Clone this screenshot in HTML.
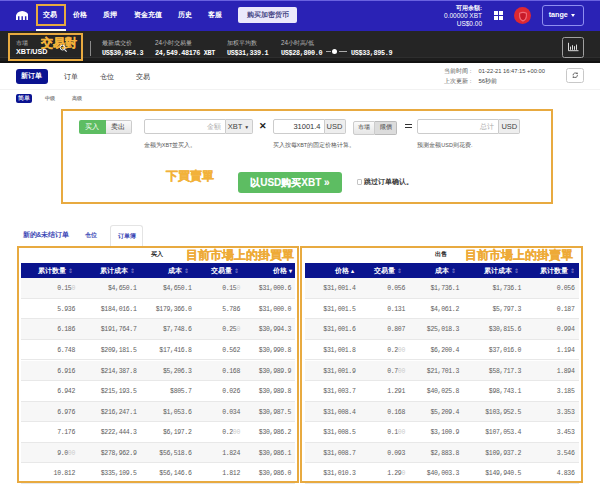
<!DOCTYPE html>
<html><head><meta charset="utf-8">
<style>
*{margin:0;padding:0;box-sizing:border-box}
html,body{width:600px;height:484px;overflow:hidden;background:#fff;font-family:"Liberation Sans",sans-serif;position:relative}
.a{position:absolute}
.nav{left:0;top:0;width:600px;height:31px;background:#2a22b5}
.navtop{left:0;top:0;width:600px;height:1px;background:#6a62e0}
.ni{color:#fff;font-size:7.2px;top:11px;line-height:8px;white-space:nowrap;font-weight:bold}
.ob{border:2px solid #e8aa40}
.dark{left:0;top:31px;width:600px;height:31.5px;background:linear-gradient(#252525 0,#252525 26px,#2e2e2e 26px,#2e2e2e 27px,#1d1d1d 27px,#1d1d1d 30.5px,#111 30.5px)}
.lbl{color:#bdbdbd;font-size:6.3px;line-height:7px;white-space:nowrap}
.val{color:#fff;font-size:6.8px;letter-spacing:-0.33px;line-height:8px;font-weight:bold;font-family:"Liberation Mono",monospace;white-space:nowrap}
.orange{color:#f2b23a;font-weight:bold;white-space:nowrap;-webkit-text-stroke:0.35px #f2b23a}
.tbl{font-family:"Liberation Mono",monospace;font-size:6.5px;letter-spacing:-0.33px;color:#606060}
.hdr{background:#0a148e;height:14.5px}
.row{height:20.55px;border-bottom:1px solid #e8e8e8}
.g{background:#f7f7f7}
.c{position:absolute;top:0;line-height:20px;text-align:right;white-space:nowrap}
.hc{position:absolute;top:0;line-height:14.5px;color:#fff;font-family:"Liberation Sans",sans-serif;font-weight:bold;font-size:6px;white-space:nowrap;text-align:right}
.f{color:#ccc}

.tv{position:absolute;height:20.55px;line-height:21.4px;text-align:right;white-space:nowrap;font-family:"Liberation Mono",monospace;font-size:6.5px;letter-spacing:-0.33px;color:#606060}
.hc{position:absolute;height:14.5px;line-height:15px;color:#fff;font-weight:bold;font-size:6.5px;white-space:nowrap;text-align:right}
.si{color:#8a8fd0;font-weight:normal;font-size:6px}
.sw{font-size:6px}
.bt{position:absolute;font-size:6px;line-height:14px;text-align:center}
.inp{position:absolute;border:1px solid #ccc;background:#fff;border-radius:2px 0 0 2px}
.add{position:absolute;border:1px solid #ccc;border-left:none;background:#eee;border-radius:0 2px 2px 0;color:#444;text-align:center}
.help{position:absolute;color:#555;font-size:5.5px;line-height:7px;white-space:nowrap}
</style></head><body>
<!-- NAV -->
<div class="a nav"></div>
<div class="a navtop"></div>
<svg class="a" style="left:15.8px;top:10.5px" width="12.4" height="9.5" viewBox="0 0 124 95"><path d="M0 52A62 52 0 0 1 124 52Z" fill="#fff"/><rect x="0" y="40" width="20" height="55" rx="10" fill="#fff"/><rect x="34.7" y="40" width="20" height="55" rx="10" fill="#fff"/><rect x="69.3" y="40" width="20" height="55" rx="10" fill="#fff"/><rect x="104" y="40" width="20" height="55" rx="10" fill="#fff"/></svg>
<div class="a ob" style="left:36px;top:4px;width:30px;height:22px"></div>
<div class="a" style="left:36px;top:29px;width:30px;height:2px;background:#fff"></div>
<div class="a ni" style="left:43px">交易</div>
<div class="a ni" style="left:73px">价格</div>
<div class="a ni" style="left:103px">质押</div>
<div class="a ni" style="left:134px">资金充值</div>
<div class="a ni" style="left:178px">历史</div>
<div class="a ni" style="left:208px">客服</div>
<div class="a" style="left:238.3px;top:7.3px;width:59px;height:15.6px;background:#ebe9fb;border-radius:2px;color:#4a4a88;font-weight:bold;font-size:7px;line-height:15.6px;text-align:center">购买加密货币</div>
<div class="a" style="left:400px;top:4px;width:82px;text-align:right;color:#fff;font-size:6.5px;line-height:8px"><b style="font-size:6px">可用余額:</b><br>0.00000 XBT<br>US$0.00</div>
<div class="a" style="left:494px;top:11px;width:4px;height:4px;background:#fff"></div>
<div class="a" style="left:499px;top:11px;width:4px;height:4px;background:#fff"></div>
<div class="a" style="left:494px;top:16px;width:4px;height:4px;background:#fff"></div>
<div class="a" style="left:499px;top:16px;width:4px;height:4px;background:#fff"></div>
<div class="a" style="left:513.75px;top:7px;width:17px;height:17px;border-radius:50%;background:#de2832"></div>
<svg class="a" style="left:517.5px;top:10.5px" width="10" height="11" viewBox="0 0 10 11"><path d="M1.6 2.2Q5 0.6 8.4 2.2V5.2Q8.4 8 5 10Q1.6 8 1.6 5.2Z" fill="#c81a28" stroke="#f06a76" stroke-width="1.1"/></svg>
<div class="a" style="left:542px;top:5px;width:42px;height:20.5px;border:1px solid #8f8ff0;border-radius:3px"></div><div class="a" style="left:548.7px;top:10px;color:#fff;font-weight:bold;font-size:7.2px;line-height:9px">tange</div><div class="a" style="left:570.7px;top:14px;width:0;height:0;border-left:2.7px solid transparent;border-right:2.7px solid transparent;border-top:3px solid #fff"></div>

<!-- DARK BAR -->
<div class="a dark"></div>
<div class="a ob" style="left:7.5px;top:32.5px;width:75px;height:28px;border-width:2.5px"></div>
<div class="a lbl" style="left:16px;top:39px">市場</div>
<div class="a" style="left:16px;top:47.5px;color:#fff;font-weight:bold;font-size:7.2px;line-height:8px">XBT/USD</div>
<div class="a orange" style="left:41px;top:35.5px;font-size:12px;line-height:14px">交易對</div>
<svg class="a" style="left:58.5px;top:44px" width="9" height="9" viewBox="0 0 9 9"><circle cx="3.6" cy="3.6" r="2.4" fill="none" stroke="#eee" stroke-width="1"/><path d="M5.4 5.4L7.6 7.6" stroke="#eee" stroke-width="1.1"/></svg>
<div class="a" style="left:90px;top:41px;width:1px;height:15px;background:#8a8a8a"></div>
<div class="a lbl" style="left:102px;top:39px">最新成交价</div>
<div class="a val" style="left:102px;top:49px">US$30,954.3</div>
<div class="a lbl" style="left:155px;top:39px">24小时交易量</div>
<div class="a val" style="left:155px;top:49px">24,549.48176 XBT</div>
<div class="a lbl" style="left:227px;top:39px">加权平均数</div>
<div class="a val" style="left:227px;top:49px">US$31,339.1</div>
<div class="a lbl" style="left:281px;top:39px">24小时高/低</div>
<div class="a val" style="left:281px;top:49px">US$28,800.0</div>
<div class="a" style="left:325.7px;top:51.2px;width:5px;height:1.3px;background:#aaa"></div><div class="a" style="left:339px;top:51.2px;width:8px;height:1.3px;background:#aaa"></div>
<div class="a" style="left:332px;top:49.2px;width:5px;height:5px;border-radius:50%;background:#fff"></div>
<div class="a val" style="left:351px;top:49px">US$33,895.9</div>
<div class="a" style="left:562px;top:36.5px;width:22px;height:21.5px;border:1px solid #a0a0a0;border-radius:2.5px"></div>
<svg class="a" style="left:566px;top:42px" width="14" height="10" viewBox="0 0 14 10"><path d="M2.5 0.8V8.7H12.5" fill="none" stroke="#f0f0f0" stroke-width="0.9"/><path d="M4.5 7.8V4.6M6.5 7.8V3.2M8.5 7.8V4.2M10.5 7.8V2.6" stroke="#f0f0f0" stroke-width="0.9"/></svg>

<!-- TABS -->
<div class="a" style="left:15.5px;top:69px;width:32px;height:14.7px;background:#0a1290;border-radius:3px;color:#fff;font-size:7px;font-weight:bold;line-height:14.7px;text-align:center">新订单</div>
<div class="a" style="left:64px;top:72.5px;color:#333;font-size:7px;line-height:8px">订单</div>
<div class="a" style="left:100px;top:72.5px;color:#333;font-size:7px;line-height:8px">仓位</div>
<div class="a" style="left:136px;top:72.5px;color:#333;font-size:7px;line-height:8px">交易</div>
<div class="a" style="left:444px;top:67.5px;color:#555;font-size:6px;line-height:7px">当前时间 :</div>
<div class="a" style="left:478.5px;top:67.5px;color:#444;font-size:5.75px;line-height:7px">01-22-21 16:47:15 +00:00</div>
<div class="a" style="left:444px;top:78px;color:#555;font-size:6px;line-height:7px">上次更新 :</div>
<div class="a" style="left:478.5px;top:78px;color:#444;font-size:6px;line-height:7px">56秒前</div>
<div class="a" style="left:566.25px;top:68.25px;width:17.5px;height:15px;border:1px solid #c8c8c8;border-radius:2.5px"></div><svg class="a" style="left:571.5px;top:72.3px" width="6.5" height="6.5" viewBox="0 0 13 13"><path d="M2.2 6.8A4.3 4.3 0 0 1 9.8 3.6" fill="none" stroke="#555" stroke-width="1.8"/><path d="M10.8 6.2A4.3 4.3 0 0 1 3.2 9.4" fill="none" stroke="#555" stroke-width="1.8"/><path d="M8 1.2L11.8 1.6L11 5.2Z" fill="#555"/><path d="M5 11.8L1.2 11.4L2 7.8Z" fill="#555"/></svg>
<div class="a" style="left:0;top:89px;width:600px;height:1px;background:#f2f2f2"></div>
<div class="a" style="left:16px;top:94px;width:16px;height:8.5px;background:#0a1290;border-radius:2px;color:#dde;font-size:5.5px;font-weight:bold;line-height:8.5px;text-align:center">简单</div>
<div class="a" style="left:45px;top:95px;color:#888;font-size:5.2px;font-weight:bold;line-height:7px">中级</div>
<div class="a" style="left:72px;top:95px;color:#888;font-size:5.2px;font-weight:bold;line-height:7px">高级</div>

<!-- ORDER FORM -->
<div class="a ob" style="left:60.5px;top:108.5px;width:492px;height:95px"></div>


<div class="bt a" style="left:78.75px;top:119.5px;width:27px;height:14.25px;background:#5dbd62;border-radius:2px 0 0 2px;color:#fff;font-size:7px">买入</div>
<div class="bt a" style="left:105.5px;top:119.5px;width:26.5px;height:14.25px;background:linear-gradient(#fafafa,#e6e6e6);border:1px solid #ccc;border-left:none;border-radius:0 2px 2px 0;color:#333;font-size:7px;line-height:12.5px">卖出</div>
<div class="inp" style="left:143.75px;top:118.75px;width:82px;height:15px;color:#aaa;font-size:6.5px;line-height:13px;text-align:right;padding-right:4px">金額</div>
<div class="add" style="left:225.5px;top:118.75px;width:27px;height:15px;font-size:7.5px;line-height:13px">XBT <span style="font-size:5px">▼</span></div>
<div class="a" style="left:258.5px;top:120px;font-size:9px;line-height:12px;font-weight:bold;color:#222">✕</div>
<div class="inp" style="left:272.5px;top:118.75px;width:52px;height:15px;color:#333;font-size:7.5px;line-height:13px;text-align:right;padding-right:3px">31001.4</div>
<div class="add" style="left:324.5px;top:118.75px;width:21px;height:15px;font-size:7.5px;line-height:13px">USD</div>
<div class="bt a" style="left:352.5px;top:121.25px;width:22.5px;height:13.25px;background:linear-gradient(#fafafa,#e6e6e6);border:1px solid #ccc;border-radius:2px 0 0 2px;color:#333;line-height:11.5px">市場</div>
<div class="bt a" style="left:375px;top:121.25px;width:22px;height:13.25px;background:#dcdcdc;border:1px solid #bbb;border-left:none;border-radius:0 2px 2px 0;color:#333;line-height:11.5px">限價</div>
<div class="a" style="left:404.5px;top:123.7px;width:7.2px;height:1.3px;background:#333"></div>
<div class="a" style="left:404.5px;top:127.2px;width:7.2px;height:1.3px;background:#333"></div>
<div class="inp" style="left:417.3px;top:119.2px;width:82px;height:14.7px;color:#aaa;font-size:6.5px;line-height:13px;text-align:right;padding-right:4px">总计</div>
<div class="add" style="left:499.2px;top:119.2px;width:21.3px;height:14.7px;font-size:7.5px;line-height:13px">USD</div>
<div class="help" style="left:143.75px;top:141.5px">金额为XBT並买入。</div>
<div class="help" style="left:272.5px;top:141.5px">买入按每XBT的固定价格计算。</div>
<div class="help" style="left:417.3px;top:141.5px">预测金额USD则花费.</div>
<div class="a orange" style="left:166px;top:169px;font-size:12px;line-height:14px">下買賣單</div>
<div class="a" style="left:238.2px;top:172.4px;width:103.5px;height:21.1px;background:#5dbd62;border-radius:3px;color:#fff;font-weight:bold;font-size:10px;line-height:21px;text-align:center;-webkit-text-stroke:0.1px #fff">以USD购买XBT »</div>
<div class="a" style="left:356.8px;top:179.2px;width:5.5px;height:5.5px;border:0.8px solid #c4c4c4;border-radius:1px;background:#fff"></div>
<div class="help" style="left:364px;top:178px;color:#333;font-size:6.6px;font-weight:bold">跳过订单确认。</div>

<!-- ORDER BOOK TABS -->
<div class="a" style="left:22.5px;top:230.5px;color:#3a46b4;font-size:6.5px;font-weight:bold;line-height:8px">新的&amp;未结订单</div>
<div class="a" style="left:85.3px;top:230.5px;color:#3a46b4;font-size:6.2px;font-weight:bold;line-height:8px">仓位</div>
<div class="a" style="left:110px;top:224.5px;width:33px;height:21px;border:1px solid #e4e4e4;border-bottom:none;border-radius:3px 3px 0 0;color:#3a46b4;font-size:6.2px;font-weight:bold;line-height:20px;text-align:center">订单簿</div>

<!--T-->
<div class="a hdr" style="left:21px;top:263px;width:274px"></div>
<div class="a hc" style="left:21px;top:263px;width:51.5px">累计数量 <span class="si">⇕</span></div>
<div class="a hc" style="left:21px;top:263px;width:113.80000000000001px">累计成本 <span class="si">⇕</span></div>
<div class="a hc" style="left:21px;top:263px;width:168px">成本 <span class="si">⇕</span></div>
<div class="a hc" style="left:21px;top:263px;width:217.75px">交易量 <span class="si">⇕</span></div>
<div class="a hc" style="left:21px;top:263px;width:271px">价格 <span class='sw'>▾</span></div>
<div class="a row g" style="left:21px;top:278.30px;width:274px"></div>
<div class="a tv" style="left:21px;top:278.30px;width:54px">0.15<span class="f">0</span></div>
<div class="a tv" style="left:21px;top:278.30px;width:115.5px">$4,650.1</div>
<div class="a tv" style="left:21px;top:278.30px;width:170.5px">$4,650.1</div>
<div class="a tv" style="left:21px;top:278.30px;width:219px">0.15<span class="f">0</span></div>
<div class="a tv" style="left:21px;top:278.30px;width:270px">$31,000.6</div>
<div class="a row" style="left:21px;top:298.85px;width:274px"></div>
<div class="a tv" style="left:21px;top:298.85px;width:54px">5.936</div>
<div class="a tv" style="left:21px;top:298.85px;width:115.5px">$184,016.1</div>
<div class="a tv" style="left:21px;top:298.85px;width:170.5px">$179,366.0</div>
<div class="a tv" style="left:21px;top:298.85px;width:219px">5.786</div>
<div class="a tv" style="left:21px;top:298.85px;width:270px">$31,000.0</div>
<div class="a row g" style="left:21px;top:319.40px;width:274px"></div>
<div class="a tv" style="left:21px;top:319.40px;width:54px">6.186</div>
<div class="a tv" style="left:21px;top:319.40px;width:115.5px">$191,764.7</div>
<div class="a tv" style="left:21px;top:319.40px;width:170.5px">$7,748.6</div>
<div class="a tv" style="left:21px;top:319.40px;width:219px">0.25<span class="f">0</span></div>
<div class="a tv" style="left:21px;top:319.40px;width:270px">$30,994.3</div>
<div class="a row" style="left:21px;top:339.95px;width:274px"></div>
<div class="a tv" style="left:21px;top:339.95px;width:54px">6.748</div>
<div class="a tv" style="left:21px;top:339.95px;width:115.5px">$209,181.5</div>
<div class="a tv" style="left:21px;top:339.95px;width:170.5px">$17,416.8</div>
<div class="a tv" style="left:21px;top:339.95px;width:219px">0.562</div>
<div class="a tv" style="left:21px;top:339.95px;width:270px">$30,990.8</div>
<div class="a row g" style="left:21px;top:360.50px;width:274px"></div>
<div class="a tv" style="left:21px;top:360.50px;width:54px">6.916</div>
<div class="a tv" style="left:21px;top:360.50px;width:115.5px">$214,387.8</div>
<div class="a tv" style="left:21px;top:360.50px;width:170.5px">$5,206.3</div>
<div class="a tv" style="left:21px;top:360.50px;width:219px">0.168</div>
<div class="a tv" style="left:21px;top:360.50px;width:270px">$30,989.9</div>
<div class="a row" style="left:21px;top:381.05px;width:274px"></div>
<div class="a tv" style="left:21px;top:381.05px;width:54px">6.942</div>
<div class="a tv" style="left:21px;top:381.05px;width:115.5px">$215,193.5</div>
<div class="a tv" style="left:21px;top:381.05px;width:170.5px">$805.7</div>
<div class="a tv" style="left:21px;top:381.05px;width:219px">0.026</div>
<div class="a tv" style="left:21px;top:381.05px;width:270px">$30,989.8</div>
<div class="a row g" style="left:21px;top:401.60px;width:274px"></div>
<div class="a tv" style="left:21px;top:401.60px;width:54px">6.976</div>
<div class="a tv" style="left:21px;top:401.60px;width:115.5px">$216,247.1</div>
<div class="a tv" style="left:21px;top:401.60px;width:170.5px">$1,053.6</div>
<div class="a tv" style="left:21px;top:401.60px;width:219px">0.034</div>
<div class="a tv" style="left:21px;top:401.60px;width:270px">$30,987.5</div>
<div class="a row" style="left:21px;top:422.15px;width:274px"></div>
<div class="a tv" style="left:21px;top:422.15px;width:54px">7.176</div>
<div class="a tv" style="left:21px;top:422.15px;width:115.5px">$222,444.3</div>
<div class="a tv" style="left:21px;top:422.15px;width:170.5px">$6,197.2</div>
<div class="a tv" style="left:21px;top:422.15px;width:219px">0.2<span class="f">00</span></div>
<div class="a tv" style="left:21px;top:422.15px;width:270px">$30,986.2</div>
<div class="a row g" style="left:21px;top:442.70px;width:274px"></div>
<div class="a tv" style="left:21px;top:442.70px;width:54px">9.0<span class="f">00</span></div>
<div class="a tv" style="left:21px;top:442.70px;width:115.5px">$278,962.9</div>
<div class="a tv" style="left:21px;top:442.70px;width:170.5px">$56,518.6</div>
<div class="a tv" style="left:21px;top:442.70px;width:219px">1.824</div>
<div class="a tv" style="left:21px;top:442.70px;width:270px">$30,986.1</div>
<div class="a row" style="left:21px;top:463.25px;width:274px"></div>
<div class="a tv" style="left:21px;top:463.25px;width:54px">10.812</div>
<div class="a tv" style="left:21px;top:463.25px;width:115.5px">$335,109.5</div>
<div class="a tv" style="left:21px;top:463.25px;width:170.5px">$56,146.6</div>
<div class="a tv" style="left:21px;top:463.25px;width:219px">1.812</div>
<div class="a tv" style="left:21px;top:463.25px;width:270px">$30,986.0</div>
<div class="a hdr" style="left:304.5px;top:263px;width:274.0px"></div>
<div class="a hc" style="left:304.5px;top:263px;width:49.0px">价格 <span class='sw'>▴</span></div>
<div class="a hc" style="left:304.5px;top:263px;width:97.5px">交易量 <span class="si">⇕</span></div>
<div class="a hc" style="left:304.5px;top:263px;width:151.5px">成本 <span class="si">⇕</span></div>
<div class="a hc" style="left:304.5px;top:263px;width:214.20000000000005px">累计成本 <span class="si">⇕</span></div>
<div class="a hc" style="left:304.5px;top:263px;width:270.20000000000005px">累计数量 <span class="si">⇕</span></div>
<div class="a row g" style="left:304.5px;top:278.30px;width:274.0px"></div>
<div class="a tv" style="left:304.5px;top:278.30px;width:51.0px">$31,001.4</div>
<div class="a tv" style="left:304.5px;top:278.30px;width:100.5px">0.056</div>
<div class="a tv" style="left:304.5px;top:278.30px;width:154.5px">$1,736.1</div>
<div class="a tv" style="left:304.5px;top:278.30px;width:216.5px">$1,736.1</div>
<div class="a tv" style="left:304.5px;top:278.30px;width:270.0px">0.056</div>
<div class="a row" style="left:304.5px;top:298.85px;width:274.0px"></div>
<div class="a tv" style="left:304.5px;top:298.85px;width:51.0px">$31,001.5</div>
<div class="a tv" style="left:304.5px;top:298.85px;width:100.5px">0.131</div>
<div class="a tv" style="left:304.5px;top:298.85px;width:154.5px">$4,061.2</div>
<div class="a tv" style="left:304.5px;top:298.85px;width:216.5px">$5,797.3</div>
<div class="a tv" style="left:304.5px;top:298.85px;width:270.0px">0.187</div>
<div class="a row g" style="left:304.5px;top:319.40px;width:274.0px"></div>
<div class="a tv" style="left:304.5px;top:319.40px;width:51.0px">$31,001.6</div>
<div class="a tv" style="left:304.5px;top:319.40px;width:100.5px">0.807</div>
<div class="a tv" style="left:304.5px;top:319.40px;width:154.5px">$25,018.3</div>
<div class="a tv" style="left:304.5px;top:319.40px;width:216.5px">$30,815.6</div>
<div class="a tv" style="left:304.5px;top:319.40px;width:270.0px">0.994</div>
<div class="a row" style="left:304.5px;top:339.95px;width:274.0px"></div>
<div class="a tv" style="left:304.5px;top:339.95px;width:51.0px">$31,001.8</div>
<div class="a tv" style="left:304.5px;top:339.95px;width:100.5px">0.2<span class="f">00</span></div>
<div class="a tv" style="left:304.5px;top:339.95px;width:154.5px">$6,200.4</div>
<div class="a tv" style="left:304.5px;top:339.95px;width:216.5px">$37,016.0</div>
<div class="a tv" style="left:304.5px;top:339.95px;width:270.0px">1.194</div>
<div class="a row g" style="left:304.5px;top:360.50px;width:274.0px"></div>
<div class="a tv" style="left:304.5px;top:360.50px;width:51.0px">$31,001.9</div>
<div class="a tv" style="left:304.5px;top:360.50px;width:100.5px">0.7<span class="f">00</span></div>
<div class="a tv" style="left:304.5px;top:360.50px;width:154.5px">$21,701.3</div>
<div class="a tv" style="left:304.5px;top:360.50px;width:216.5px">$58,717.3</div>
<div class="a tv" style="left:304.5px;top:360.50px;width:270.0px">1.894</div>
<div class="a row" style="left:304.5px;top:381.05px;width:274.0px"></div>
<div class="a tv" style="left:304.5px;top:381.05px;width:51.0px">$31,003.7</div>
<div class="a tv" style="left:304.5px;top:381.05px;width:100.5px">1.291</div>
<div class="a tv" style="left:304.5px;top:381.05px;width:154.5px">$40,025.8</div>
<div class="a tv" style="left:304.5px;top:381.05px;width:216.5px">$98,743.1</div>
<div class="a tv" style="left:304.5px;top:381.05px;width:270.0px">3.185</div>
<div class="a row g" style="left:304.5px;top:401.60px;width:274.0px"></div>
<div class="a tv" style="left:304.5px;top:401.60px;width:51.0px">$31,008.4</div>
<div class="a tv" style="left:304.5px;top:401.60px;width:100.5px">0.168</div>
<div class="a tv" style="left:304.5px;top:401.60px;width:154.5px">$5,209.4</div>
<div class="a tv" style="left:304.5px;top:401.60px;width:216.5px">$103,952.5</div>
<div class="a tv" style="left:304.5px;top:401.60px;width:270.0px">3.353</div>
<div class="a row" style="left:304.5px;top:422.15px;width:274.0px"></div>
<div class="a tv" style="left:304.5px;top:422.15px;width:51.0px">$31,008.5</div>
<div class="a tv" style="left:304.5px;top:422.15px;width:100.5px">0.1<span class="f">00</span></div>
<div class="a tv" style="left:304.5px;top:422.15px;width:154.5px">$3,100.9</div>
<div class="a tv" style="left:304.5px;top:422.15px;width:216.5px">$107,053.4</div>
<div class="a tv" style="left:304.5px;top:422.15px;width:270.0px">3.453</div>
<div class="a row g" style="left:304.5px;top:442.70px;width:274.0px"></div>
<div class="a tv" style="left:304.5px;top:442.70px;width:51.0px">$31,008.7</div>
<div class="a tv" style="left:304.5px;top:442.70px;width:100.5px">0.093</div>
<div class="a tv" style="left:304.5px;top:442.70px;width:154.5px">$2,883.8</div>
<div class="a tv" style="left:304.5px;top:442.70px;width:216.5px">$109,937.2</div>
<div class="a tv" style="left:304.5px;top:442.70px;width:270.0px">3.546</div>
<div class="a row" style="left:304.5px;top:463.25px;width:274.0px"></div>
<div class="a tv" style="left:304.5px;top:463.25px;width:51.0px">$31,010.3</div>
<div class="a tv" style="left:304.5px;top:463.25px;width:100.5px">1.29<span class="f">0</span></div>
<div class="a tv" style="left:304.5px;top:463.25px;width:154.5px">$40,003.3</div>
<div class="a tv" style="left:304.5px;top:463.25px;width:216.5px">$149,940.5</div>
<div class="a tv" style="left:304.5px;top:463.25px;width:270.0px">4.836</div>
<!--/T-->
<div class="a" style="left:150.5px;top:249.5px;color:#222;font-weight:bold;font-size:6.3px;line-height:8px">买入</div>
<div class="a orange" style="left:186px;top:248px;font-size:11.65px;line-height:14px;-webkit-text-stroke:0.2px #eeaa36;color:#eeaa36">目前市場上的掛買單</div>
<div class="a" style="left:435px;top:249.5px;color:#222;font-weight:bold;font-size:6.3px;line-height:8px">出售</div>
<div class="a orange" style="left:465px;top:248px;font-size:11.65px;line-height:14px;-webkit-text-stroke:0.2px #eeaa36;color:#eeaa36">目前市場上的掛賣單</div>

<!-- BOOK BOXES -->
<div class="a ob" style="left:17px;top:245.5px;width:282px;height:237.5px;border-width:2.5px"></div>
<div class="a ob" style="left:300px;top:245.5px;width:282.7px;height:237.5px;border-width:2.5px"></div>
</body></html>
